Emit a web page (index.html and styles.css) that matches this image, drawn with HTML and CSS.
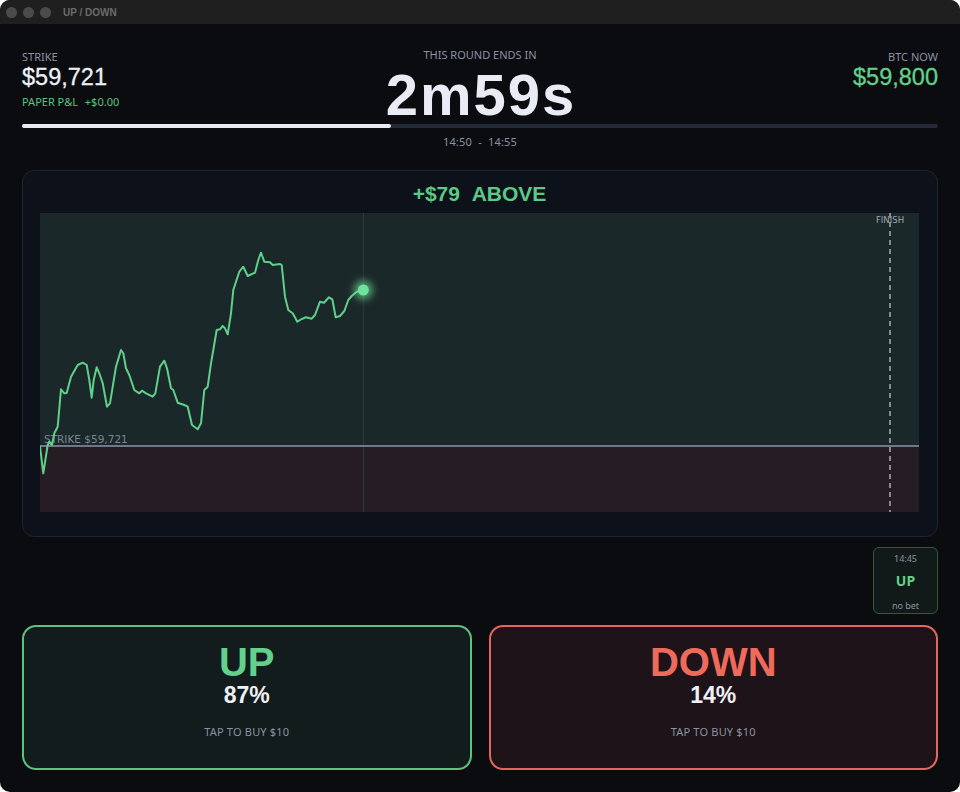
FILE: index.html
```html
<!DOCTYPE html>
<html lang="en">
<head>
  <meta charset="UTF-8" />
  <meta name="viewport" content="width=device-width, initial-scale=1.0"/>
  <title>UP / DOWN</title>
  <link rel="stylesheet" href="styles.css">
</head>
<body>
  <div class="window">
    <div class="titlebar">
      <span class="light"></span>
      <span class="light"></span>
      <span class="light"></span>
      <span class="app-name">UP / DOWN</span>
    </div>

    <div class="app">
      <!-- Strike / countdown / live price -->
      <div class="top">
        <div class="side">
          <div class="label">STRIKE</div>
          <div class="price">$59,721</div>
          <div class="pnl">PAPER P&amp;L <span class="pnl-value">+$0.00</span></div>
        </div>
        <div class="countdown">
          <div class="label">THIS ROUND ENDS IN</div>
          <div class="clock">2m59s</div>
        </div>
        <div class="side right">
          <div class="label">BTC NOW</div>
          <div class="price live">$59,800</div>
        </div>
      </div>

      <div class="progress"><div class="progress-fill" style="width: 40.3%"></div></div>
      <div class="range">14:50  -  14:55</div>

      <!-- Price chart for the round -->
      <div class="chart-card">
        <div class="chart-title">+$79&nbsp;&nbsp;ABOVE</div>
        <svg class="plot" width="879" height="299" viewBox="0 0 879 299">
          <defs>
            <filter id="glow" x="-100%" y="-100%" width="300%" height="300%">
              <feGaussianBlur stdDeviation="3.5"/>
            </filter>
          </defs>
          <rect x="0" y="0" width="879" height="233" fill="#1b2829"/>
          <rect x="0" y="233" width="879" height="66" fill="#251c24"/>
          <line x1="323.5" y1="0" x2="323.5" y2="299" stroke="#2c3739" stroke-width="1"/>
          <line x1="850" y1="0" x2="850" y2="299" stroke="#a7acb6" stroke-width="1.5" stroke-dasharray="5 4"/>
          <text class="finish" x="850" y="10" text-anchor="middle">FINISH</text>
          <line x1="0" y1="233" x2="879" y2="233" stroke="#8b93a8" stroke-width="1.5"/>
          <text class="strike" x="4" y="230">STRIKE $59,721</text>
          <polyline fill="none" stroke="#5fd08a" stroke-width="2" stroke-linejoin="round" stroke-linecap="round"
            points="0,233.7 3.3,260.3 7.7,232 9.3,228.7 12,232 14.3,220.3 17.7,213.7 21,176.3 24.3,180.3 26.7,180 31,163.7 37.7,152 42.7,149.7 46.7,152 49.3,167 51.7,184.7 53.7,167 56.7,154.3 59.3,160.3 62.7,170.3 67,193.7 70,190.3 76,153.7 81,137 83.3,140.3 86,155.3 89.3,162 94.3,177 99.3,180.3 102,177.7 106,180.3 112.7,183.7 115.3,180.3 120,153.7 124.3,147.7 127,155.3 131,175.3 133.3,177 137.7,189.7 144.3,192 147.7,193.7 152,212 157.7,216.3 161,210.3 164.3,177 167.7,173.7 171,150.3 173.3,137 176.7,117 180,116.3 182.7,113 185,115.3 187.7,121.3 191,100.3 193.3,77 199.3,58.7 203.3,53.7 207.7,63 215,59.7 218.3,47 221,39.7 224.3,48.7 230,49.3 232.7,52 240,51 241.7,52 245,83.7 248.3,97 252.7,100.3 257.3,108.7 261.7,106 266,104.3 271.7,105.7 275,102 280,88.7 284,89.7 289,84.3 292.3,86.3 295.7,104.3 300,103 304.3,98 308.3,87 311.7,83 316.7,78.7 323.3,77"/>
          <circle cx="323.3" cy="77" r="10" fill="#6fe39b" opacity="0.6" filter="url(#glow)"/>
          <circle cx="323.3" cy="77" r="5.5" fill="#6ee39a"/>
        </svg>
      </div>

      <!-- Previous rounds -->
      <div class="history">
        <div class="round-chip">
          <div class="chip-time">14:45</div>
          <div class="chip-result">UP</div>
          <div class="chip-note">no bet</div>
        </div>
      </div>

      <div class="bets">
        <button class="bet up">
          <span class="bet-side">UP</span>
          <span class="bet-odds">87%</span>
          <span class="bet-hint">TAP TO BUY $10</span>
        </button>
        <button class="bet down">
          <span class="bet-side">DOWN</span>
          <span class="bet-odds">14%</span>
          <span class="bet-hint">TAP TO BUY $10</span>
        </button>
      </div>
    </div>
  </div>
</body>
</html>
```

FILE: styles.css
```css
html, body {
  margin: 0;
  background-color: #ffffff;
}

.window {
  width: 960px;
  height: 792px;
  border-radius: 10px;
  overflow: hidden;
  background-color: #0a0c10;
  display: flex;
  flex-direction: column;
  font-family: 'Noto Sans', 'DejaVu Sans', sans-serif;
}

.titlebar {
  height: 24px;
  flex-shrink: 0;
  background-color: #1f1f1f;
  display: flex;
  align-items: center;
  gap: 6px;
  padding-left: 6px;
}

.light {
  width: 11px;
  height: 11px;
  border-radius: 50%;
  background-color: #4b4b4b;
}

.app-name {
  margin-left: 6px;
  font-family: 'Liberation Sans', Arial, sans-serif;
  font-weight: 700;
  font-size: 10px;
  color: #6b6b6b;
}

.app {
  flex: 1;
  display: flex;
  flex-direction: column;
  padding: 26px 22px 22px;
}

/* header */
.top {
  display: grid;
  grid-template-columns: 1fr auto 1fr;
}

.label {
  font-size: 11px;
  line-height: 14px;
  color: #8a91a3;
}

.side.right {
  text-align: right;
}

.price {
  font-family: 'Liberation Sans', Arial, sans-serif;
  font-size: 23.5px;
  line-height: 26px;
  color: #eef0f6;
  -webkit-text-stroke: 0.3px currentColor;
}

.price.live {
  color: #63d08a;
}

.pnl {
  margin-top: 5px;
  font-size: 11px;
  line-height: 14px;
  color: #5cc37f;
}

.pnl-value {
  margin-left: 4px;
}

.countdown {
  margin-top: -2px;
  text-align: center;
}

.clock {
  margin-top: 5px;
  padding-left: 2px;
  font-family: 'Liberation Sans', Arial, sans-serif;
  font-weight: 700;
  font-size: 58px;
  line-height: 56px;
  letter-spacing: 2px;
  color: #e9ecf5;
}

.progress {
  margin-top: 1px;
  height: 4px;
  border-radius: 2px;
  background-color: #232936;
}

.progress-fill {
  height: 100%;
  border-radius: 2px;
  background-color: #e8ebf3;
}

.range {
  margin-top: 7px;
  font-size: 11px;
  line-height: 14px;
  text-align: center;
  color: #8a91a3;
  white-space: pre;
  letter-spacing: 0.2px;
}

/* chart */
.chart-card {
  margin-top: 21px;
  border: 1px solid #1e2433;
  border-radius: 12px;
  background-color: #0d1119;
  padding: 11px 18px 24px 17px;
}

.chart-title {
  font-family: 'Liberation Sans', Arial, sans-serif;
  font-weight: 700;
  font-size: 21px;
  line-height: 24px;
  text-align: center;
  color: #5cc986;
  margin-bottom: 7px;
}

.plot {
  display: block;
}

.plot .finish {
  font-family: 'DejaVu Sans', sans-serif;
  font-size: 8.5px;
  fill: #a0a6b0;
}

.plot .strike {
  font-family: 'DejaVu Sans', sans-serif;
  font-size: 10.5px;
  fill: #7b8497;
}

/* last rounds */
.history {
  margin-top: 10px;
  display: flex;
  justify-content: flex-end;
}

.round-chip {
  box-sizing: border-box;
  width: 65px;
  height: 67px;
  border: 1px solid #2d5a3d;
  border-radius: 6px;
  background-color: #111a18;
  display: flex;
  flex-direction: column;
  align-items: center;
  padding-top: 5px;
}

.chip-time, .chip-note {
  font-size: 9px;
  line-height: 12px;
  color: #8a91a3;
}

.chip-result {
  margin-top: 7px;
  font-weight: 700;
  font-size: 14px;
  line-height: 18px;
  color: #63d08a;
}

.chip-note {
  margin-top: 10px;
}

/* buy buttons */
.bets {
  flex: 1;
  margin-top: 11px;
  display: grid;
  grid-template-columns: 1fr 1fr;
  gap: 17px;
}

.bet {
  display: flex;
  flex-direction: column;
  align-items: center;
  padding: 13px 0 0;
  border-radius: 14px;
  border: 2px solid;
  cursor: pointer;
  font-family: 'Liberation Sans', Arial, sans-serif;
}

.bet.up {
  border-color: #5ec27f;
  background-color: #121c1c;
}

.bet.down {
  border-color: #e3675b;
  background-color: #1d1318;
}

.bet-side {
  font-weight: 700;
  font-size: 40px;
  line-height: 44px;
}

.bet.up .bet-side {
  color: #63d08c;
}

.bet.down .bet-side {
  color: #ee6a5b;
}

.bet-odds {
  margin-top: -2px;
  font-weight: 700;
  font-size: 23px;
  line-height: 26px;
  color: #eef0f5;
}

.bet-hint {
  margin-top: 17px;
  font-family: 'Noto Sans', sans-serif;
  font-size: 11px;
  line-height: 14px;
  letter-spacing: 0.2px;
  color: #8a91a3;
}
```
